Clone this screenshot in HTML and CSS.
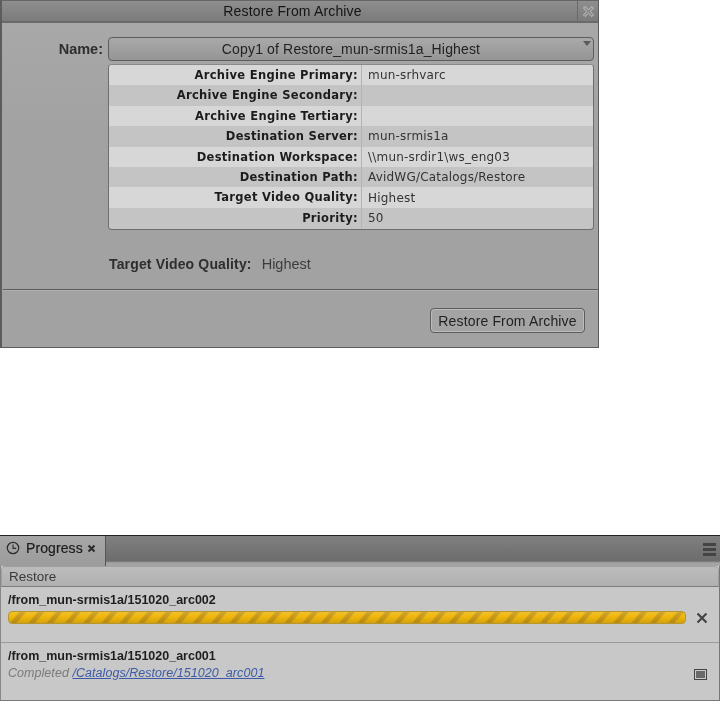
FILE: index.html
```html
<!DOCTYPE html>
<html lang="en">
<head>
<meta charset="utf-8">
<title>Restore From Archive</title>
<link rel="stylesheet" href="styles.css">
</head>
<body>
<section class="dialog">
  <header class="dialog-title">
    <span class="dialog-title-text">Restore From Archive</span>
    <span class="dialog-close">
      <svg width="13" height="13" viewBox="0 0 13 13"><path d="M1.5 3 3 1.5l3.5 3.2L10 1.5 11.5 3 8.2 6.5l3.3 3.5L10 11.5 6.5 8.2 3 11.5 1.5 10l3.3-3.5z" fill="none" stroke="#c8c8c8" stroke-width="1"/></svg>
    </span>
  </header>
  <div class="dialog-body">
    <div class="name-row">
      <span class="name-label">Name:</span>
      <div class="select">Copy1 of Restore_mun-srmis1a_Highest<span class="select-arrow"></span></div>
    </div>
    <div class="details">
      <div class="row"><span class="key">Archive Engine Primary:</span><span class="val">mun-srhvarc</span></div>
      <div class="row"><span class="key">Archive Engine Secondary:</span><span class="val"></span></div>
      <div class="row"><span class="key">Archive Engine Tertiary:</span><span class="val"></span></div>
      <div class="row"><span class="key">Destination Server:</span><span class="val">mun-srmis1a</span></div>
      <div class="row"><span class="key">Destination Workspace:</span><span class="val">\\mun-srdir1\ws_eng03</span></div>
      <div class="row"><span class="key">Destination Path:</span><span class="val">AvidWG/Catalogs/Restore</span></div>
      <div class="row"><span class="key">Target Video Quality:</span><span class="val">Highest</span></div>
      <div class="row"><span class="key">Priority:</span><span class="val">50</span></div>
    </div>
    <div class="quality"><span class="quality-key">Target Video Quality:</span><span class="quality-val">Highest</span></div>
  </div>
  <footer class="dialog-foot">
    <button class="btn" type="button">Restore From Archive</button>
  </footer>
</section>

<section class="panel">
  <div class="tabbar">
    <div class="tab">
      <svg class="tab-icon" width="14" height="14" viewBox="0 0 14 14"><circle cx="7" cy="7" r="5.7" fill="none" stroke="#2c2c2c" stroke-width="1.2"/><path d="M7 3.5V7.4H10.2" fill="none" stroke="#2c2c2c" stroke-width="1.1"/></svg>
      <span class="tab-label">Progress</span>
      <svg class="tab-x" width="9" height="9" viewBox="0 0 9 9"><path d="M1.5 1.5l6 6M7.5 1.5l-6 6" stroke="#2a2a2a" stroke-width="2"/></svg>
    </div>
    <div class="menu"><i></i><i></i><i></i></div>
  </div>
  <div class="panel-body">
    <div class="group-head">Restore</div>
    <div class="job job-active">
      <div class="job-name">/from_mun-srmis1a/151020_arc002</div>
      <div class="job-line">
        <div class="bar"></div>
        <svg class="job-x" width="12" height="12" viewBox="0 0 12 12"><path d="M1.5 1.5l9 9M10.5 1.5l-9 9" stroke="#444" stroke-width="2.2"/></svg>
      </div>
    </div>
    <div class="job">
      <div class="job-name">/from_mun-srmis1a/151020_arc001</div>
      <div class="job-line">
        <div class="job-status"><em>Completed</em> <a href="#">/Catalogs/Restore/151020_arc001</a></div>
        <span class="job-box"></span>
      </div>
    </div>
  </div>
</section>
</body>
</html>
```
FILE: styles.css
```css
* { box-sizing: border-box; }
html, body { margin: 0; background: #fff; }
body { width: 724px; height: 701px; overflow: hidden; position: relative; }

.dialog {
  width: 599px; height: 348px;
  background: #a2a2a2;
  border: 1px solid #5c5c5c;
  border-top-color: #666;
  border-left-width: 2px;
  font-family: "Liberation Sans", Arial, sans-serif;
  display: flex; flex-direction: column;
  filter: blur(.35px);
}
.dialog-title {
  height: 22px; flex: none;
  display: flex; align-items: center; justify-content: center;
  position: relative;
  background: linear-gradient(#8e8e8e, #7b7b7b);
  border-bottom: 2px solid #6a6a6a;
  font-size: 14px; font-weight: 400; color: #141414; letter-spacing: .15px;
}
.dialog-title-text { margin-left: -15px; }
.dialog-close {
  position: absolute; right: 0; top: 0; width: 21px; height: 20px;
  border-left: 1px solid #6a6a6a;
  display: flex; align-items: center; justify-content: center;
}
.dialog-body { flex: none; height: 266px; padding: 14px 4px 0 0; background: linear-gradient(#a8a8a8, #a2a2a2 40%); }
.name-row { display: flex; align-items: center; height: 24px; }
.name-label {
  width: 106px; padding-right: 5px; text-align: right;
  font-size: 14.5px; font-weight: 700; color: #2e2e2e;
}
.select {
  width: 486px; height: 24px; position: relative;
  border: 1px solid #5d5d5d; border-radius: 4px;
  background: linear-gradient(#a9a9a9, #959595);
  text-align: center; line-height: 22px;
  font-size: 14px; color: #222; letter-spacing: .15px;
}
.select-arrow {
  position: absolute; right: 2px; top: 3px;
  border-left: 4px solid transparent; border-right: 4px solid transparent;
  border-top: 5px solid #5a5a5a;
}
.details {
  margin: 3px 0 0 106px; width: 486px; height: 166px;
  border: 1px solid #6e6e6e; border-top-color: #8a8a8a; border-radius: 4px;
  overflow: hidden;
  font-family: "DejaVu Sans", Verdana, sans-serif; font-size: 11.5px;
  background: #c4c4c4;
}
.row { display: flex; height: 20.4px; align-items: center; }
.row:nth-child(odd) { background: #d7d7d7; }
.row:nth-child(even) { background: #c4c4c4; }
.key {
  width: 253px; height: 100%; padding-right: 3px; text-align: right;
  font-weight: 700; color: #1c1c1c; line-height: 20px; letter-spacing: .3px;
  border-right: 1px solid #b4b4b4;
  white-space: nowrap;
}
.val { padding-left: 6px; color: #333; font-size: 12px; letter-spacing: .2px; }
.quality {
  display: flex; align-items: baseline; margin: 26px 0 0 107px;
}
.quality-key { font-size: 14px; font-weight: 700; color: #2e2e2e; letter-spacing: .15px; }
.quality-val { font-size: 14.5px; color: #3c3c3c; margin-left: 10px; }
.dialog-foot {
  flex: 1; position: relative;
  border-top: 1px solid #5c5c5c; margin-left: 1px;
  display: flex; justify-content: flex-end; align-items: flex-start;
  padding: 18px 13px 0 0;
  box-shadow: inset 0 1px 0 #b0b0b0;
}
.btn {
  width: 155px; height: 25px; padding: 0;
  border: 1px solid #5d5d5d; border-radius: 4px;
  background: #a4a4a4;
  box-shadow: inset 0 0 0 1px #bcbcbc;
  font: 400 14px "Liberation Sans", Arial, sans-serif; letter-spacing: .15px; color: #222;
}

.panel {
  position: absolute; left: 0; top: 535px; width: 720px; height: 166px;
  font-family: "Liberation Sans", Arial, sans-serif;
  border-top: 1px solid #222;
  background: #c8c8c8;
  filter: blur(.4px);
}
.tabbar {
  height: 30px;
  display: flex; justify-content: space-between;
  background: linear-gradient(#808080, #6c6c6c 25px, #8e8e8e 26px, #a4a4a4 27px);
}
.tab {
  width: 106px; height: 30px;
  display: flex; align-items: flex-start; padding: 4px 0 0 6px;
  background: linear-gradient(#a6a6a6, #9c9c9c);
  border-right: 1px solid #555;
}
.tab-label { font-size: 14px; font-weight: 400; color: #1c1c1c; margin-left: 6px; line-height: 16px; letter-spacing: .1px; -webkit-text-stroke: .2px #1c1c1c; }
.tab-icon { margin-top: 1px; }
.tab-x { margin: 4px 0 0 4px; }
.menu { width: 13px; margin: 7px 4px 0 0; display: flex; flex-direction: column; gap: 2px; }
.menu i { display: block; height: 3px; background: #444; }
.panel-body { height: 135px; border-left: 1px solid #888; border-right: 1px solid #777; border-bottom: 1px solid #777; }
.group-head {
  height: 21px; line-height: 19px; padding-left: 7px;
  border: 1px solid #a0a0a0; border-bottom: 1px solid #7d7d7d; border-radius: 5px 5px 0 0;
  background: linear-gradient(#bcbcbc, #b0b0b0);
  font-size: 13.5px; color: #3a3a3a;
}
.job { padding: 7px 0 0 7px; }
.job-active { height: 56px; border-bottom: 1px solid #9a9a9a; }
.job-name { font-size: 12.5px; font-weight: 700; color: #1e1e1e; line-height: 13px; }
.job-line { display: flex; align-items: center; justify-content: space-between; }
.bar {
  width: 678px; height: 13px; margin-top: 4px; border-radius: 4px;
  border: 1px solid #b8962f;
  background:
    linear-gradient(rgba(255,255,255,.12), rgba(0,0,0,0) 40%, rgba(90,60,0,.18)),
    repeating-linear-gradient(-50deg, #f0b80e 0 7px, #c89a18 9px 12px, #f0b80e 14px);
}
.job-x { margin: 4px 11px 0 0; }
.job-status { font-size: 12.5px; line-height: 15px; margin-top: 3px; color: #7a7a7a; letter-spacing: .05px; }
.job-status a { color: #3c5aa6; font-style: italic; }
.job-box { width: 13px; height: 11px; margin: 5px 12px 0 0; border: 1px solid #444; background: #6a6a6a; box-shadow: inset 0 0 0 1px #ccc; }
```
